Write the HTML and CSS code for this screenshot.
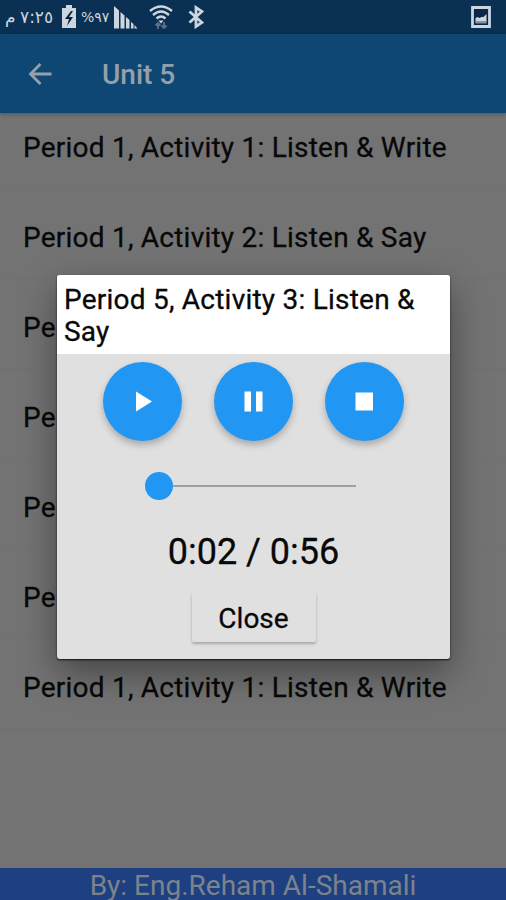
FILE: index.html
```
<!DOCTYPE html>
<html lang="en">
<head>
  <meta charset="UTF-8">
  <title>Unit 5</title>
  <link rel="stylesheet" href="styles.css">
</head>
<body>
  <div class="status-bar">
    <span class="meem">م</span>
    <span class="clock">٧:٢٥</span>
    <svg class="battery" width="16" height="24" viewBox="0 0 16 24">
      <path d="M5 0h6v3h4v20H1V3h4z" fill="#cdd5df"/>
      <path d="M10 6L4 14h4l-2 7 6-9H8l4-6z" fill="#0a2038"/>
    </svg>
    <span class="percent">%٩٧</span>
    <svg class="signal" width="24" height="24" viewBox="0 0 24 24" fill="#cdd5df">
      <path d="M0 1l5 4.500v18H0zM6.500 7l4 3.500v13h-4zM12 12l3.500 3v8.500H12zM17 17l2.500 2v4.500H17zM20.500 20l3 3.500h-3z"/>
    </svg>
    <svg class="wifi" width="26" height="25" viewBox="0 0 26 25" fill="none" stroke="#cdd5df" stroke-width="2.400">
      <path d="M2 6Q13-3 24 6M5 10q8-7 16 0M8.500 13.500q4.500-4 9 0"/>
      <path d="M10.500 15.500h5L13 18.500z" fill="#cdd5df" stroke="none"/>
      <path d="M10 24v-6m-2.500 2.500L10 18l2.500 2.500M16 17v6m-2.500-2.500L16 23l2.500-2.500" stroke="#56718e" stroke-width="1.800"/>
    </svg>
    <svg class="bluetooth" width="16" height="24" viewBox="0 0 16 24" fill="none" stroke="#cdd5df" stroke-width="2.800">
      <path d="M1.500 6.500l12.500 11-6 4V2.500l6 4-12.500 11"/>
    </svg>
    <svg class="picture" width="20" height="22" viewBox="0 0 20 22">
      <path d="M1.500 1.500h17v19h-17z" fill="#0a2648" stroke="#cdd5df" stroke-width="2.800"/>
      <path d="M4.500 16v-4l2-1 2 1 2-1 2 0 3-3v8z" fill="#cdd5df"/>
      <path d="M4.500 15h11v2.500h-11z" fill="#8493a5"/>
    </svg>
  </div>

  <header class="app-bar">
    <svg class="back" width="24" height="24" viewBox="0 0 24 24" fill="none" stroke="#96a0ab" stroke-width="2.800">
      <path d="M23.500 12H3M12.500 2L2.500 12l10 10"/>
    </svg>
    <h1>Unit 5</h1>
  </header>

  <ul class="activities">
    <li>Period 1, Activity 1: Listen &amp; Write</li>
    <li>Period 1, Activity 2: Listen &amp; Say</li>
    <li>Pe</li>
    <li>Pe</li>
    <li>Pe</li>
    <li>Pe</li>
    <li>Period 1, Activity 1: Listen &amp; Write</li>
  </ul>

  <footer>By: Eng.Reham Al-Shamali</footer>

  <div class="dialog">
    <h2>Period 5, Activity 3: Listen &amp; Say</h2>
    <div class="player">
      <div class="controls">
        <button class="round">
          <svg width="79" height="79" viewBox="0 0 79 79" fill="#fff"><path d="M33 29.500l16 10-16 10z"/></svg>
        </button>
        <button class="round">
          <svg width="79" height="79" viewBox="0 0 79 79" fill="#fff"><path d="M30.500 29.500h6.500v20h-6.500zM42 29.500h6.500v20H42z"/></svg>
        </button>
        <button class="round">
          <svg width="79" height="79" viewBox="0 0 79 79" fill="#fff"><path d="M30.500 30.500h17.500v18H30.500z"/></svg>
        </button>
      </div>
      <div class="seek"><span class="thumb"></span><span class="track"></span></div>
      <div class="time">0:02 / 0:56</div>
      <button class="close">Close</button>
    </div>
  </div>
</body>
</html>
```

FILE: styles.css
```
* {
  box-sizing: border-box;
}

body {
  margin: 0;
  height: 900px;
  display: flex;
  flex-direction: column;
  overflow: hidden;
  font-family: Roboto, sans-serif;
  background: #737373;
}

.status-bar {
  height: 34px;
  padding: 0 15px 0 5px;
  display: flex;
  align-items: center;
  background: #0a3153;
  color: #cdd5df;
  font-family: "DejaVu Sans", sans-serif;
  white-space: nowrap;
}

.meem {
  width: 15px;
  font-size: 17px;
}

.clock {
  width: 41px;
  font-size: 17px;
}

.percent {
  width: 37px;
  padding-left: 4px;
  font-size: 14px;
}

.wifi {
  margin-left: 10px;
}

.bluetooth {
  margin-left: 14px;
}

.picture {
  margin-left: auto;
}

.app-bar {
  height: 79px;
  padding-left: 28px;
  display: flex;
  align-items: center;
  background: #0f4774;
  box-shadow: 0 1px 4px rgba(0, 0, 0, 0.3);
}

h1 {
  margin: 2px 0 0 50px;
  font-size: 28px;
  font-weight: 500;
  color: #96a0ab;
}

.activities {
  flex: 1;
  margin: 0;
  padding: 0;
  list-style: none;
  overflow: hidden;
}

.activities li {
  height: 90px;
  padding: 19px 0 0 23px;
  border-bottom: 1px solid #707070;
  font-size: 28px;
  line-height: 32px;
  letter-spacing: 0.23px;
  white-space: nowrap;
  color: #080808;
  -webkit-text-stroke: 0.3px #080808;
}

.activities li:first-child {
  height: 76px;
}

.activities li + li {
  padding-top: 33px;
}

footer {
  height: 32px;
  background: #1e4080;
  color: #7c838d;
  font-size: 28px;
  line-height: 35px;
  text-align: center;
}

.dialog {
  position: absolute;
  left: 57px;
  top: 275px;
  width: 393px;
  height: 384px;
  border-radius: 3px;
  overflow: hidden;
  background: #e0e0e0;
  box-shadow: 0 1px 2px rgba(0, 0, 0, 0.8), 0 14px 36px rgba(0, 0, 0, 0.4);
}

h2 {
  margin: 0;
  height: 79px;
  padding: 9px 7px 0;
  background: #fff;
  color: #080808;
  font-size: 28px;
  font-weight: 400;
  line-height: 32px;
  letter-spacing: 0.23px;
  -webkit-text-stroke: 0.3px #080808;
}

.player {
  display: flex;
  flex-direction: column;
  align-items: center;
}

.controls {
  margin-top: 8px;
  display: flex;
  gap: 32px;
}

button {
  border: none;
  padding: 0;
  font-family: inherit;
}

.round {
  width: 79px;
  height: 79px;
  border-radius: 50%;
  background: #2196f3;
  box-shadow: 0 4px 7px rgba(0, 0, 0, 0.25);
}

.round svg {
  display: block;
}

.seek {
  width: 211px;
  height: 28px;
  margin-top: 31px;
  margin-right: 6px;
  display: flex;
  align-items: center;
}

.thumb {
  width: 28px;
  height: 28px;
  border-radius: 50%;
  background: #2196f3;
}

.track {
  flex: 1;
  height: 2px;
  background: #a0a0a0;
}

.time {
  margin-top: 31px;
  font-size: 36px;
  line-height: 42px;
  color: #080808;
  -webkit-text-stroke: 0.3px #080808;
}

.close {
  width: 124px;
  height: 50px;
  margin-top: 19px;
  padding-top: 2px;
  border-radius: 2px;
  background: #e0e0e0;
  box-shadow: 0 2px 3px rgba(0, 0, 0, 0.25);
  font-size: 28px;
  color: #080808;
  -webkit-text-stroke: 0.3px #080808;
}
```
